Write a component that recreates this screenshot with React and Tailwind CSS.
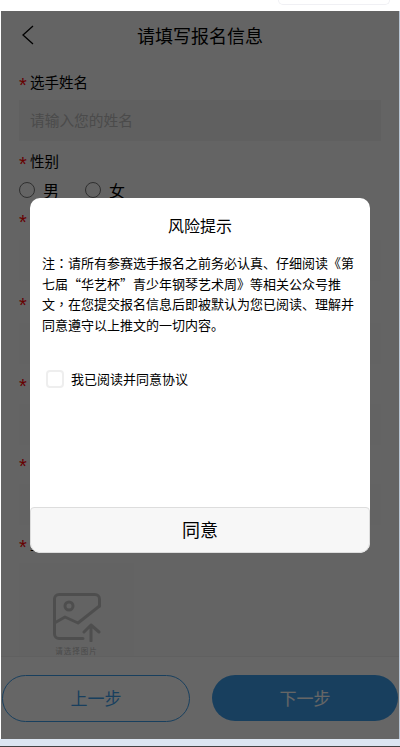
const Label = ({ children }) => (
  <div className="flex items-center h-[22px] text-[14.5px] text-black leading-[22px]">
    <span className="text-[#ff0000] w-[11px] text-[20px] font-['Liberation_Sans'] leading-[22px] pt-[6px]">*</span>
    <span>{children}</span>
  </div>
);

const Field = ({ label, className }) => (
  <div className={className}>
    <Label>{label}</Label>
    <div className="h-[41px] bg-[#f7f7f7] mt-[10px]"></div>
  </div>
);

export default function App() {
  return (
    <div
      className="relative w-[400px] h-[747px] overflow-hidden bg-white"
      style={{ fontFamily: '"Noto Sans CJK SC", "Liberation Sans", sans-serif' }}
    >
      {/* top sliver of the browser */}
      <div className="h-[11px] flex justify-end pr-[10px]">
        <div className="w-[112px] h-[5px] border-b border-x border-[#f0f0f4] rounded-b-lg"></div>
      </div>

      <div className="relative ml-px w-[399px] h-[728px] bg-[#f9f9f9] border-r border-[#b9c6d4] overflow-hidden flex flex-col">
        <div className="h-[48px] flex items-center relative shrink-0">
          <svg className="absolute left-[20px] top-[14px]" width="14" height="20" viewBox="0 0 14 20" fill="none" stroke="#000" strokeWidth="1.3">
            <path d="M12 1 L2 10 L12 19" />
          </svg>
          <div className="w-full text-center text-[18px] text-black">请填写报名信息</div>
        </div>

        <div className="px-[18px] pt-[12px] flex-1">
          <div className="mb-[9px]">
            <Label>选手姓名</Label>
            <div className="h-[41px] bg-[#f0f0f0] mt-[7px] flex items-center px-[11px] text-[14.7px] text-[#bbbbbb]">请输入您的姓名</div>
          </div>
          <Label>性别</Label>
          <div className="flex items-center h-[26px] mt-[5px] mb-[5px] text-[16px] text-black">
            <span className="w-[16px] h-[16px] rounded-full border border-[#777777]"></span>
            <span className="ml-[8px] w-[42px]">男</span>
            <span className="w-[16px] h-[16px] rounded-full border border-[#777777]"></span>
            <span className="ml-[8px]">女</span>
          </div>
          <Field label="出生年月" className="mb-[10px]" />
          <Field label="联系电话" className="mb-[8px]" />
          <Field label="所在城市" className="mb-[7px]" />
          <Field label="参赛组别" className="mb-[8px]" />
          <Label>上传照片</Label>
          <div className="w-[115px] h-[100px] mt-[8px] bg-[#f7f7f7] flex flex-col items-center pt-[29px]">
            <svg className="shrink-0" width="50" height="50" viewBox="0 0 50 50" fill="none" stroke="#c4c4c4" strokeWidth="3" strokeLinecap="round" strokeLinejoin="round">
              <path d="M31 46.5 H7 a4.5 4.5 0 0 1 -4.5 -4.5 V7 a4.5 4.5 0 0 1 4.5 -4.5 H43 a4.5 4.5 0 0 1 4.5 4.5 V14" />
              <circle cx="17" cy="14" r="4" />
              <path d="M2.5 31 L13 25 L26 31 L47.5 14" />
              <path d="M39 33 V49 M32 40 L39 33 L47 40" />
            </svg>
            <div className="mt-[4px] text-[7.5px] tracking-[1px] text-[#bbbbbb] leading-[10px] whitespace-nowrap">请选择图片</div>
          </div>
        </div>

        <div className="absolute left-0 right-0 bottom-0 h-[83px] bg-white border-t border-[#f0f0f0] flex items-center justify-between px-px">
          <div className="w-[188px] h-[47px] rounded-full border border-[#3e9fec] flex items-center justify-center text-[17px] text-[#3e9fec]">上一步</div>
          <div className="w-[186px] h-[46px] rounded-full bg-[#3e9fec] flex items-center justify-center text-[17px] text-white">下一步</div>
        </div>

        {/* dim layer */}
        <div className="absolute inset-0 bg-black/60"></div>
      </div>

      <div className="absolute left-[30px] top-[198px] w-[340px] h-[355px] bg-white rounded-[10px] flex flex-col overflow-hidden">
        <div className="text-center text-[16px] text-black pt-[15px] leading-[24px]">风险提示</div>
        <div className="px-[12px] mt-[16px] text-[13px] leading-[20.6px] text-black">
          注<span className="font-['Noto_Sans_CJK_TC']">：</span>请所有参赛选手报名之前务必认真、仔细阅读《第七届<span className="inline-block w-[13px] text-right">“</span>华艺杯<span className="inline-block w-[13px] text-left">”</span>青少年钢琴艺术周》等相关公众号推文<span className="font-['Noto_Sans_CJK_TC']">，</span>在您提交报名信息后即被默认为您已阅读、理解并同意遵守以上推文的一切内容。
        </div>
        <div className="flex items-center ml-[16px] mt-[34px] text-[13px] text-black">
          <span className="w-[18px] h-[18px] border-2 border-[#eeeeee] rounded-sm"></span>
          <span className="ml-[7px]">我已阅读并同意协议</span>
        </div>
        <div className="mt-auto h-[46px] bg-[#f7f7f7] border border-[#dddddd] rounded-t-[4px] rounded-b-[10px] flex items-center justify-center text-[18px] leading-[24px] pb-[2px] text-black">同意</div>
      </div>

      <div className="absolute left-0 right-0 bottom-0 h-[8px] bg-[#dce6f2] border-b border-[#444444]"></div>
    </div>
  );
}
